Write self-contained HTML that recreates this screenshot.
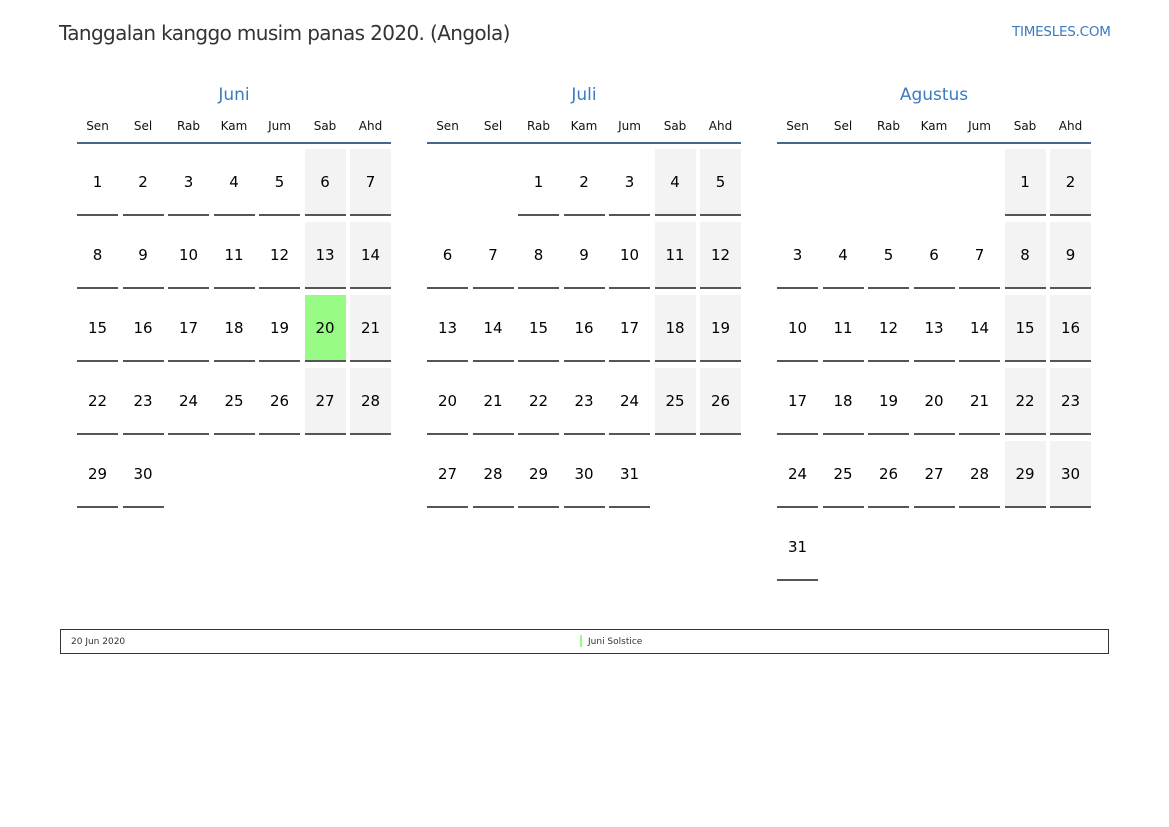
<!DOCTYPE html>
<html><head><meta charset="utf-8"><style>
body{margin:0;width:1169px;height:827px;background:#fff;font-family:"DejaVu Sans","Liberation Sans",sans-serif;position:relative;overflow:hidden}
.t{position:absolute;left:59px;top:21px;font-size:20px;color:#333;letter-spacing:-0.62px}
.l{position:absolute;left:1012px;top:24px;font-size:13.5px;color:#3a7bbf;letter-spacing:-0.25px}
.m{position:absolute;top:82px;width:314px}
.mt{text-align:center;font-size:17px;color:#3a7bbf;height:26px;line-height:26px}
.h{display:grid;grid-template-columns:repeat(7,41px);column-gap:4.5px;font-size:12px;color:#111;text-align:center;height:34px;line-height:37px;border-bottom:2px solid #47658f}
.g{display:grid;grid-template-columns:repeat(7,41px);column-gap:4.5px;grid-auto-rows:67px;row-gap:6px;margin-top:5px}
.g b,.g i{font-weight:normal;font-style:normal;font-size:15px;color:#000;text-align:center;line-height:66px}
.g b{border-bottom:2px solid #555}
.g b.w{background:#f3f3f3}
.g b.s{background:#98fb85}
.lg{position:absolute;left:60px;top:629px;width:1047px;height:23px;border:1.5px solid #333;font-size:9px;color:#333}
</style></head><body>
<div class="t">Tanggalan kanggo musim panas 2020. (Angola)</div>
<div class="l">TIMESLES.COM</div>

<div class="m" style="left:77px"><div class="mt">Juni</div>
<div class="h"><span>Sen</span><span>Sel</span><span>Rab</span><span>Kam</span><span>Jum</span><span>Sab</span><span>Ahd</span></div>
<div class="g">
<b>1</b><b>2</b><b>3</b><b>4</b><b>5</b><b class="w">6</b><b class="w">7</b>
<b>8</b><b>9</b><b>10</b><b>11</b><b>12</b><b class="w">13</b><b class="w">14</b>
<b>15</b><b>16</b><b>17</b><b>18</b><b>19</b><b class="s">20</b><b class="w">21</b>
<b>22</b><b>23</b><b>24</b><b>25</b><b>26</b><b class="w">27</b><b class="w">28</b>
<b>29</b><b>30</b>
</div></div>

<div class="m" style="left:427px"><div class="mt">Juli</div>
<div class="h"><span>Sen</span><span>Sel</span><span>Rab</span><span>Kam</span><span>Jum</span><span>Sab</span><span>Ahd</span></div>
<div class="g">
<i></i><i></i><b>1</b><b>2</b><b>3</b><b class="w">4</b><b class="w">5</b>
<b>6</b><b>7</b><b>8</b><b>9</b><b>10</b><b class="w">11</b><b class="w">12</b>
<b>13</b><b>14</b><b>15</b><b>16</b><b>17</b><b class="w">18</b><b class="w">19</b>
<b>20</b><b>21</b><b>22</b><b>23</b><b>24</b><b class="w">25</b><b class="w">26</b>
<b>27</b><b>28</b><b>29</b><b>30</b><b>31</b>
</div></div>

<div class="m" style="left:777px"><div class="mt">Agustus</div>
<div class="h"><span>Sen</span><span>Sel</span><span>Rab</span><span>Kam</span><span>Jum</span><span>Sab</span><span>Ahd</span></div>
<div class="g">
<i></i><i></i><i></i><i></i><i></i><b class="w">1</b><b class="w">2</b>
<b>3</b><b>4</b><b>5</b><b>6</b><b>7</b><b class="w">8</b><b class="w">9</b>
<b>10</b><b>11</b><b>12</b><b>13</b><b>14</b><b class="w">15</b><b class="w">16</b>
<b>17</b><b>18</b><b>19</b><b>20</b><b>21</b><b class="w">22</b><b class="w">23</b>
<b>24</b><b>25</b><b>26</b><b>27</b><b>28</b><b class="w">29</b><b class="w">30</b>
<b>31</b>
</div></div>

<div class="lg">
<span style="position:absolute;left:10px;top:7px">20 Jun 2020</span>
<span style="position:absolute;left:519px;top:5px;width:2px;height:12px;background:#98fb85"></span>
<span style="position:absolute;left:527px;top:7px">Juni Solstice</span>
</div>
</body></html>
